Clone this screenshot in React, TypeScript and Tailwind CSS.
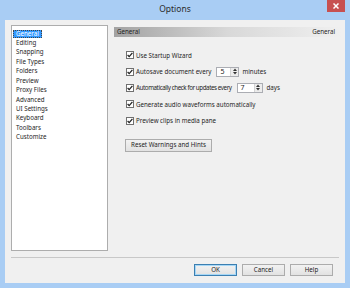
import React from "react";

const font = { fontFamily: '"Noto Sans", "Open Sans", Arial, sans-serif' };

const pages = [
  "General",
  "Editing",
  "Snapping",
  "File Types",
  "Folders",
  "Preview",
  "Proxy Files",
  "Advanced",
  "UI Settings",
  "Keyboard",
  "Toolbars",
  "Customize",
];

function Check() {
  return (
    <span className="w-[8px] h-[8px] border border-[#707070] bg-white flex items-center justify-center shrink-0">
      <svg width="6" height="6" viewBox="0 0 6 6">
        <path d="M0.6 3 L2.2 4.6 L5.4 0.8" stroke="#222" strokeWidth="1.3" fill="none" />
      </svg>
    </span>
  );
}

function Spin({ value, w }: { value: string; w: string }) {
  return (
    <span className={`${w} h-[10px] border border-[#abadb3] bg-white flex items-stretch`}>
      <span className="flex-1 pl-[3px] text-[7px] leading-[8px]">{value}</span>
      <span className="w-[8px] flex flex-col border-l border-[#d4d4d4] bg-[#ececec]">
        <span className="flex-1 flex items-center justify-center">
          <svg width="4" height="3" viewBox="0 0 4 3">
            <path d="M0 3 L2 0.5 L4 3 Z" fill="#333" />
          </svg>
        </span>
        <span className="flex-1 flex items-center justify-center">
          <svg width="4" height="3" viewBox="0 0 4 3">
            <path d="M0 0 L2 2.5 L4 0 Z" fill="#333" />
          </svg>
        </span>
      </span>
    </span>
  );
}

function Row({ children }: { children: React.ReactNode }) {
  return <div className="h-[16.4px] flex items-center gap-[2px] text-[6.2px]">{children}</div>;
}

function DlgButton({ label, def }: { label: string; def?: boolean }) {
  return (
    <button
      className={`w-[43px] h-[12px] text-[6.2px] leading-none text-[#222] bg-gradient-to-b from-[#f2f2f2] to-[#e2e2e2] border ${
        def ? "border-[#3c7fb1] ring-1 ring-inset ring-[#a6d7f6]" : "border-[#acacac]"
      }`}
    >
      {label}
    </button>
  );
}

export default function App() {
  return (
    <div className="w-[350px] h-[288px] bg-[#a9cdf4] flex flex-col text-[#1e1e1e]" style={font}>
      {/* title bar */}
      <div className="h-[20px] relative flex items-center justify-center">
        <span className="text-[8.5px] text-[#2b2b2b] pb-[2px]">Options</span>
        <div className="absolute right-[5px] top-0 w-[18px] h-[12px] bg-[#c75050] flex items-center justify-center">
          <svg width="6" height="6" viewBox="0 0 6 6">
            <path d="M0.5 0.5 L5.5 5.5 M5.5 0.5 L0.5 5.5" stroke="#fff" strokeWidth="1.5" />
          </svg>
        </div>
      </div>

      {/* client */}
      <div className="flex-1 mx-[5px] mb-[5px] bg-[#f0f0f0] flex flex-col">
        <div className="flex pt-[5px] pl-[6px] pr-[4px] gap-[6px]">
          <div className="w-[97px] h-[226px] bg-white border border-[#adadad] pt-[3px] pl-[1px]">
            {pages.map((p, i) => (
              <div key={p} className="h-[9.43px] flex items-center text-[6.2px] leading-none">
                {i === 0 ? (
                  <span className="bg-[#3399ff] text-[#ffffff] px-[2px] border border-dotted border-[#444] h-[8px] flex items-center">
                    {p}
                  </span>
                ) : (
                  <span className="pl-[3px]">{p}</span>
                )}
              </div>
            ))}
          </div>

          <div className="flex-1 pt-[2px]">
            <div className="h-[10px] bg-gradient-to-r from-[#a2a2a2] via-[#d8d8d8] to-[#f0f0f0] flex items-center justify-between pl-[3px] pr-[6px] text-[6.2px] leading-none">
              <span>General</span>
              <span>General</span>
            </div>

            <div className="pl-[12px] pt-[10px]">
              <Row>
                <Check />
                <span>Use Startup Wizard</span>
              </Row>
              <Row>
                <Check />
                <span className="mr-[3px]">Autosave document every</span>
                <Spin value="5" w="w-[23px]" />
                <span className="ml-[1px]">minutes</span>
              </Row>
              <Row>
                <Check />
                <span className="mr-[3px] tracking-[-0.4px]">Automatically check for updates every</span>
                <Spin value="7" w="w-[26px]" />
                <span className="ml-[2px]">days</span>
              </Row>
              <Row>
                <Check />
                <span>Generate audio waveforms automatically</span>
              </Row>
              <Row>
                <Check />
                <span>Preview clips in media pane</span>
              </Row>
              <button className="mt-[3px] -ml-[1px] w-[87px] h-[13px] text-[6.2px] leading-none bg-gradient-to-b from-[#f2f2f2] to-[#e2e2e2] border border-[#acacac]">
                Reset Warnings and Hints
              </button>
            </div>
          </div>
        </div>

        <div className="mt-[6px] ml-[6px] mr-[6px] h-px bg-[#c8c8c8]" />

        <div className="flex justify-end gap-[5px] pr-[12px] pt-[6px]">
          <DlgButton label="OK" def />
          <DlgButton label="Cancel" />
          <DlgButton label="Help" />
        </div>
      </div>
    </div>
  );
}
